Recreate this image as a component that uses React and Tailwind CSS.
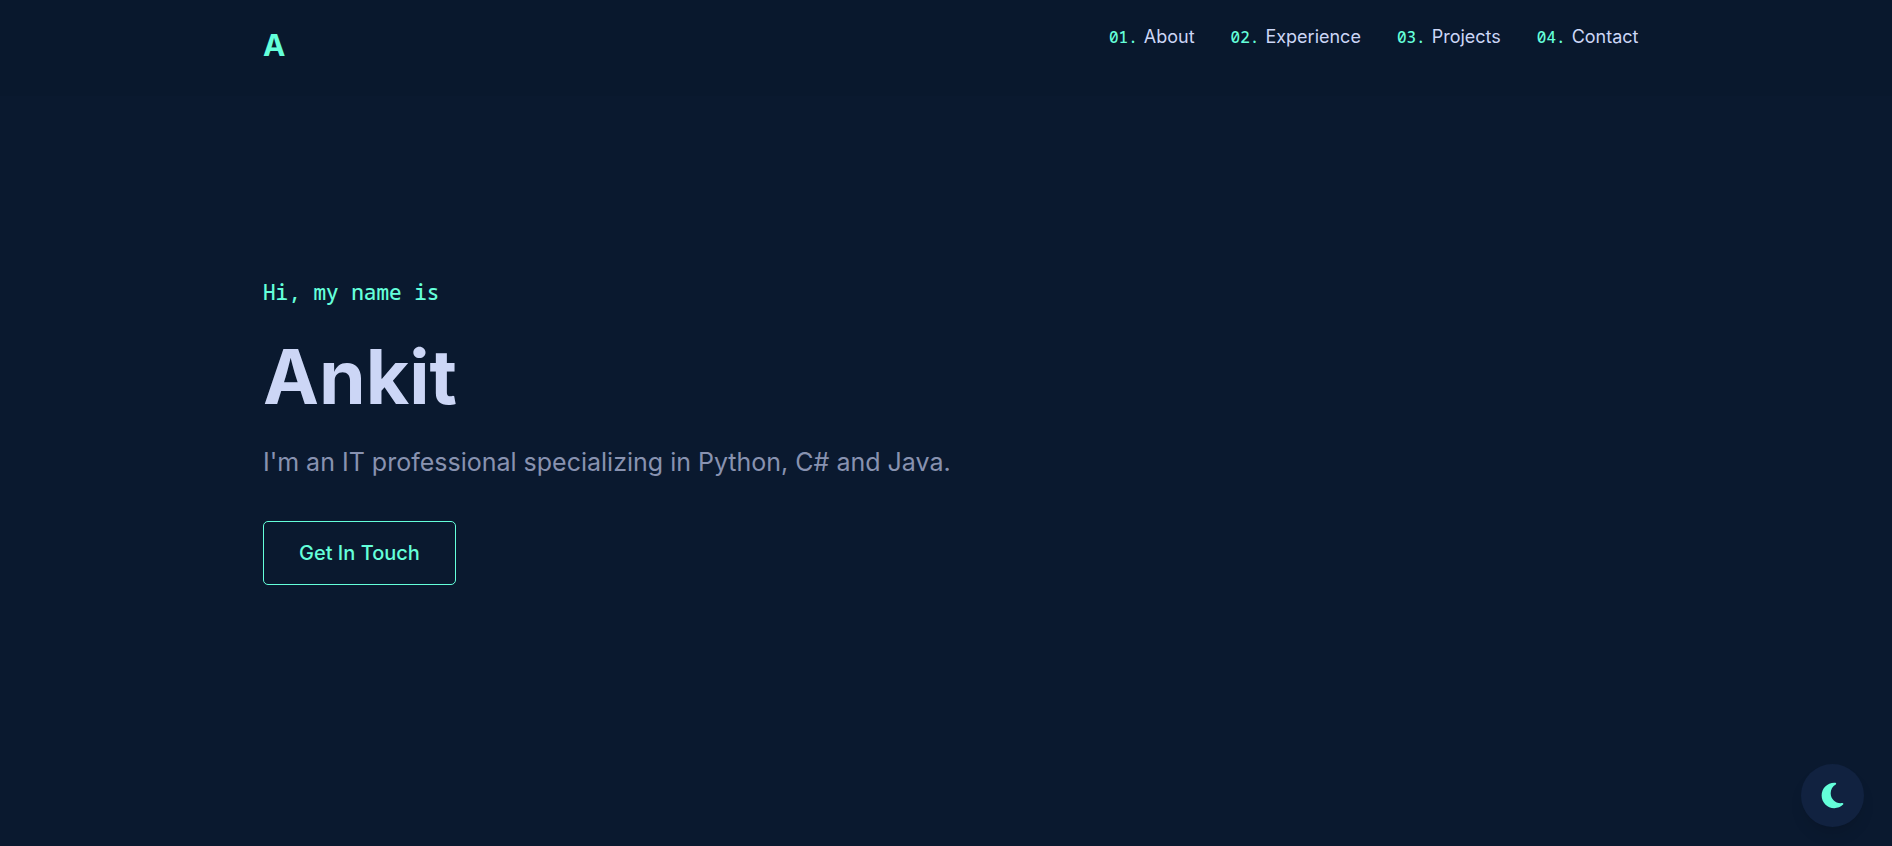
import { FaMoon } from "react-icons/fa6";

const links = [
  { number: "01.", label: "About", href: "#about" },
  { number: "02.", label: "Experience", href: "#experience" },
  { number: "03.", label: "Projects", href: "#projects" },
  { number: "04.", label: "Contact", href: "#contact" },
];

export default function App() {
  return (
    <div className="flex min-h-screen flex-col bg-[#0a192f] font-['Inter','Liberation_Sans',sans-serif] text-[#ccd6f6]">
      <header className="flex h-24 items-start justify-between bg-[#09182d] pt-6 pr-[13.4%] pl-[13.9%]">
        <a href="#home" className="text-3xl leading-[42px] font-bold text-[#64ffda]">
          A
        </a>
        <nav aria-label="Main">
          <ul className="flex gap-9">
            {links.map((link) => (
              <li key={link.href}>
                <a href={link.href} className="flex items-baseline gap-1.5 text-lg leading-[26px]">
                  <span className="font-['Noto_Sans_Mono','Liberation_Mono',monospace] text-base leading-[26px] font-medium text-[#64ffda]">
                    {link.number}
                  </span>
                  {link.label}
                </a>
              </li>
            ))}
          </ul>
        </nav>
      </header>

      <main id="home" className="flex flex-1 flex-col items-start pt-[180px] pr-[13.4%] pl-[13.9%]">
        <p className="font-['Noto_Sans_Mono','Liberation_Mono',monospace] text-[21px] leading-8 font-medium text-[#64ffda]">
          Hi, my name is
        </p>
        <h1 className="mt-6 text-[75px] leading-[90px] font-bold">Ankit</h1>
        <p className="mt-5 text-[25px] leading-10 text-[#8892b0]">
          I'm an IT professional specializing in Python, C# and Java.
        </p>
        <a
          href="#contact"
          className="mt-[39px] rounded-[5px] border border-[#64ffda] px-[35px] py-4 text-xl leading-[30px] font-medium text-[#64ffda]"
        >
          Get In Touch
        </a>
      </main>

      <button
        type="button"
        aria-label="Toggle theme"
        className="fixed right-7 bottom-[19px] flex size-[63px] items-center justify-center rounded-full bg-[#112240] text-[#64ffda] shadow-lg"
      >
        <FaMoon className="size-[29px]" />
      </button>
    </div>
  );
}
